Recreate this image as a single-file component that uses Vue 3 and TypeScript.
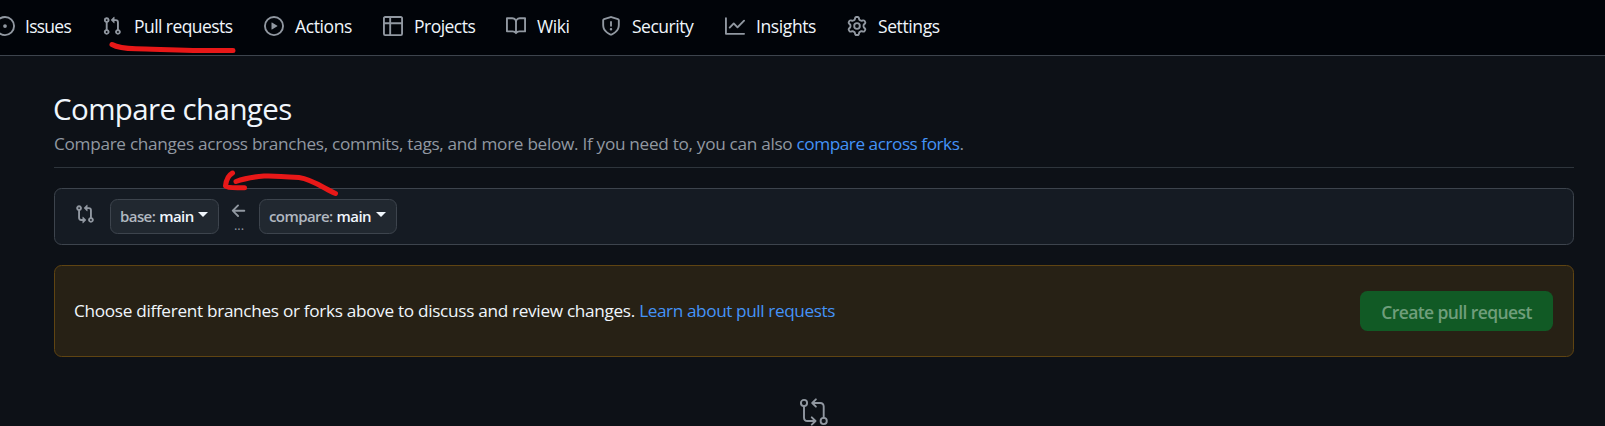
<script setup lang="ts">
interface NavItem {
  id: string
  label: string
  path: string
}

const ring = 'M8 0a8 8 0 1 1 0 16A8 8 0 0 1 8 0ZM1.5 8a6.5 6.5 0 1 0 13 0 6.5 6.5 0 0 0-13 0Z'

const comparePath =
  'M9.573.677A.25.25 0 0 1 10 .854V2.5h1A2.5 2.5 0 0 1 13.5 5v5.628a2.251 2.251 0 1 1-1.5 0V5a1 1 0 0 0-1-1h-1v1.646a.25.25 0 0 1-.427.177L7.177 3.427a.25.25 0 0 1 0-.354ZM6 12v-1.646a.25.25 0 0 1 .427-.177l2.396 2.396a.25.25 0 0 1 0 .354l-2.396 2.396A.25.25 0 0 1 6 15.146V13.5H5A2.5 2.5 0 0 1 2.5 11V5.372a2.25 2.25 0 1 1 1.5 0V11a1 1 0 0 0 1 1ZM4 3.25a.75.75 0 1 0-1.5 0 .75.75 0 0 0 1.5 0ZM12.75 12a.75.75 0 1 0 0 1.5.75.75 0 0 0 0-1.5Z'

const navItems: NavItem[] = [
  { id: 'issues', label: 'Issues', path: 'M8 9.5a1.5 1.5 0 1 0 0-3 1.5 1.5 0 0 0 0 3Z' + ring },
  {
    id: 'pulls',
    label: 'Pull requests',
    path: 'M1.5 3.25a2.25 2.25 0 1 1 3 2.122v5.256a2.251 2.251 0 1 1-1.5 0V5.372A2.25 2.25 0 0 1 1.5 3.25Zm5.677-.177L9.573.677A.25.25 0 0 1 10 .854V2.5h1A2.5 2.5 0 0 1 13.5 5v5.628a2.251 2.251 0 1 1-1.5 0V5a1 1 0 0 0-1-1h-1v1.646a.25.25 0 0 1-.427.177L7.177 3.427a.25.25 0 0 1 0-.354ZM3.75 2.5a.75.75 0 1 0 0 1.5.75.75 0 0 0 0-1.5Zm0 9.5a.75.75 0 1 0 0 1.5.75.75 0 0 0 0-1.5Zm8.25.75a.75.75 0 1 0 1.5 0 .75.75 0 0 0-1.5 0Z',
  },
  {
    id: 'actions',
    label: 'Actions',
    path: ring + 'm4.879-2.773 4.264 2.559a.25.25 0 0 1 0 .428l-4.264 2.559A.25.25 0 0 1 6 10.559V5.442a.25.25 0 0 1 .379-.215Z',
  },
  {
    id: 'projects',
    label: 'Projects',
    path: 'M0 1.75C0 .784.784 0 1.75 0h12.5C15.216 0 16 .784 16 1.75v12.5A1.75 1.75 0 0 1 14.25 16H1.75A1.75 1.75 0 0 1 0 14.25ZM6.5 6.5v8h7.75a.25.25 0 0 0 .25-.25V6.5Zm8-1.5V1.75a.25.25 0 0 0-.25-.25H6.5V5Zm-13 1.5v7.75c0 .138.112.25.25.25H5v-8ZM5 5V1.5H1.75a.25.25 0 0 0-.25.25V5Z',
  },
  {
    id: 'wiki',
    label: 'Wiki',
    path: 'M0 1.75A.75.75 0 0 1 .75 1h4.253c1.227 0 2.317.59 3 1.501A3.743 3.743 0 0 1 11.006 1h4.245a.75.75 0 0 1 .75.75v10.5a.75.75 0 0 1-.75.75h-4.507a2.25 2.25 0 0 0-1.591.659l-.622.621a.75.75 0 0 1-1.06 0l-.622-.621A2.25 2.25 0 0 0 5.258 13H.75a.75.75 0 0 1-.75-.75Zm7.251 10.324.004-5.073-.002-2.253A2.25 2.25 0 0 0 5.003 2.5H1.5v9h3.757a3.75 3.75 0 0 1 1.994.574ZM8.755 4.75l-.004 7.322a3.752 3.752 0 0 1 1.992-.572H14.5v-9h-3.495a2.25 2.25 0 0 0-2.25 2.25Z',
  },
  {
    id: 'security',
    label: 'Security',
    path: 'M7.467.133a1.748 1.748 0 0 1 1.066 0l5.25 1.68A1.75 1.75 0 0 1 15 3.48V7c0 1.566-.32 3.182-1.303 4.682-.983 1.498-2.585 2.813-5.032 3.855a1.697 1.697 0 0 1-1.33 0c-2.447-1.042-4.049-2.357-5.032-3.855C1.32 10.182 1 8.566 1 7V3.48a1.75 1.75 0 0 1 1.217-1.667Zm.61 1.429a.25.25 0 0 0-.153 0l-5.25 1.68a.25.25 0 0 0-.174.238V7c0 1.358.275 2.666 1.057 3.86.784 1.194 2.121 2.34 4.366 3.297a.196.196 0 0 0 .154 0c2.245-.956 3.582-2.104 4.366-3.298C13.225 9.666 13.5 8.36 13.5 7V3.48a.251.251 0 0 0-.174-.237l-5.25-1.68ZM8.75 4.75v3a.75.75 0 0 1-1.5 0v-3a.75.75 0 0 1 1.5 0ZM9 10.5a1 1 0 1 1-2 0 1 1 0 0 1 2 0Z',
  },
  {
    id: 'insights',
    label: 'Insights',
    path: 'M1.5 1.75V13.5h13.75a.75.75 0 0 1 0 1.5H.75a.75.75 0 0 1-.75-.75V1.75a.75.75 0 0 1 1.5 0Zm14.28 2.53-5.25 5.25a.75.75 0 0 1-1.06 0L7 7.06 4.28 9.78a.751.751 0 0 1-1.042-.018.751.751 0 0 1-.018-1.042l3.25-3.25a.75.75 0 0 1 1.06 0L10 7.94l4.72-4.72a.751.751 0 0 1 1.042.018.751.751 0 0 1 .018 1.042Z',
  },
  {
    id: 'settings',
    label: 'Settings',
    path: 'M8 0a8.2 8.2 0 0 1 .701.031C9.444.095 9.99.645 10.16 1.29l.288 1.107c.018.066.079.158.212.224.231.114.454.243.668.386.123.082.233.09.299.071l1.103-.303c.644-.176 1.392.021 1.82.63.27.385.506.792.704 1.218.315.675.111 1.422-.364 1.891l-.814.806c-.049.048-.098.147-.088.294.016.257.016.515 0 .772-.01.147.038.246.088.294l.814.806c.475.469.679 1.216.364 1.891a7.977 7.977 0 0 1-.704 1.217c-.428.61-1.176.807-1.82.63l-1.102-.302c-.067-.019-.177-.011-.3.071a5.909 5.909 0 0 1-.668.386c-.133.066-.194.158-.211.224l-.29 1.106c-.168.646-.715 1.196-1.458 1.26a8.006 8.006 0 0 1-1.402 0c-.743-.064-1.289-.614-1.458-1.26l-.289-1.106c-.018-.066-.079-.158-.212-.224a5.738 5.738 0 0 1-.668-.386c-.123-.082-.233-.09-.299-.071l-1.103.303c-.644.176-1.392-.021-1.82-.63a8.12 8.12 0 0 1-.704-1.218c-.315-.675-.111-1.422.363-1.891l.815-.806c.05-.048.098-.147.088-.294a6.214 6.214 0 0 1 0-.772c.01-.147-.038-.246-.088-.294l-.815-.806C.635 6.045.431 5.298.746 4.623a7.92 7.92 0 0 1 .704-1.217c.428-.61 1.176-.807 1.82-.63l1.102.302c.067.019.177.011.3-.071.214-.143.437-.272.668-.386.133-.066.194-.158.211-.224l.29-1.106C6.009.645 6.556.095 7.299.03 7.53.01 7.764 0 8 0Zm-.571 1.525c-.036.003-.108.036-.137.146l-.289 1.105c-.147.561-.549.967-.998 1.189-.173.086-.34.183-.5.29-.417.278-.97.423-1.529.27l-1.103-.303c-.109-.03-.175.016-.195.045-.22.312-.412.644-.573.99-.014.031-.021.11.059.19l.815.806c.411.406.562.957.53 1.456a4.709 4.709 0 0 0 0 .582c.032.499-.119 1.05-.53 1.456l-.815.806c-.081.08-.073.159-.059.19.162.346.353.677.573.989.02.03.085.076.195.046l1.102-.303c.56-.153 1.113-.008 1.53.27.161.107.328.204.501.29.447.222.85.629.997 1.189l.289 1.105c.029.109.101.143.137.146a6.6 6.6 0 0 0 1.142 0c.036-.003.108-.036.137-.146l.289-1.105c.147-.561.549-.967.998-1.189.173-.086.34-.183.5-.29.417-.278.97-.423 1.529-.27l1.103.303c.109.029.175-.016.195-.045.22-.313.411-.644.573-.99.014-.031.021-.11-.059-.19l-.815-.806c-.411-.406-.562-.957-.53-1.456a4.709 4.709 0 0 0 0-.582c-.032-.499.119-1.05.53-1.456l.815-.806c.081-.08.073-.159.059-.19a6.464 6.464 0 0 0-.573-.989c-.02-.03-.085-.076-.195-.046l-1.102.303c-.56.153-1.113.008-1.53-.27a4.44 4.44 0 0 0-.501-.29c-.447-.222-.85-.629-.997-1.189l-.289-1.105c-.029-.11-.101-.143-.137-.146a6.6 6.6 0 0 0-1.142 0ZM11 8a3 3 0 1 1-6 0 3 3 0 0 1 6 0ZM9.5 8a1.5 1.5 0 1 0-3.001.001A1.5 1.5 0 0 0 9.5 8Z',
  },
]
</script>

<template>
  <div class="page">
    <nav class="repo-nav">
      <a v-for="item in navItems" :key="item.id" class="nav-item" :class="item.id">
        <svg class="icon" viewBox="0 0 16 16"><path :d="item.path" /></svg>
        <span class="nav-label">{{ item.label }}</span>
      </a>
    </nav>

    <main class="content">
      <header class="heading">
        <h1 class="title">Compare changes</h1>
        <p class="subtitle">
          Compare changes across branches, commits, tags, and more below. If you need to, you can also
          <a class="link forks">compare across forks</a>.
        </p>
      </header>

      <section class="range">
        <svg class="icon range-icon" viewBox="0 0 16 16"><path :d="comparePath" /></svg>
        <button class="branch base">
          <span class="kind">base:</span><span class="name">main</span><i class="caret"></i>
        </button>
        <div class="direction">
          <svg class="arrow" viewBox="0 0 16 16">
            <path d="M7.78 12.53a.75.75 0 0 1-1.06 0L2.47 8.28a.75.75 0 0 1 0-1.06l4.25-4.25a.751.751 0 0 1 1.042.018.751.751 0 0 1 .018 1.042L4.81 7h7.44a.75.75 0 0 1 0 1.5H4.81l2.97 2.97a.75.75 0 0 1 0 1.06Z" />
          </svg>
          <span class="dots">...</span>
        </div>
        <button class="branch compare">
          <span class="kind">compare:</span><span class="name">main</span><i class="caret"></i>
        </button>
      </section>

      <section class="flash">
        <p class="flash-text">
          Choose different branches or forks above to discuss and review changes.
          <a class="link learn">Learn about pull requests</a>
        </p>
        <button class="create" disabled>Create pull request</button>
      </section>

      <svg class="blank-icon" viewBox="0 0 30 30">
        <circle cx="5" cy="6" r="3.1" />
        <circle cx="24.7" cy="24" r="3.1" />
        <path d="M5 9.2V20.5Q5 24 8.5 24H16.4M12.8 20.3L16.5 24L12.8 27.7" />
        <path d="M24.7 20.8V9.5Q24.7 6 21.2 6H13.3M16.9 2.3L13.2 6L16.9 9.7" />
      </svg>
    </main>

    <svg class="marks" viewBox="0 0 1605 426">
      <path d="M112 44.5C118 48 127 48.6 136 48.7C158 49 190 51 233 50.5" />
      <path d="M335.5 193.5C325 189 313 179.500 299 177.500C286 176.500 273 175.500 264 176C252 177 244 178.500 236 181.500" />
      <path d="M232.500 173C228 175.500 226 181 225.500 186C228 188.500 236 187.700 244.500 187.700" />
    </svg>
  </div>
</template>

<style>
body {
  margin: 0;
  background: #0d1117;
}
</style>

<style scoped>
.page {
  position: relative;
  height: 426px;
  overflow: hidden;
  background: #0d1117;
  color: #f0f6fc;
  font-family: "Open Sans", "Noto Sans", sans-serif;
  font-size: 17.5px;
}
.repo-nav {
  box-sizing: border-box;
  height: 56px;
  padding-bottom: 3px;
  background: #010409;
  border-bottom: 1px solid #3d444d;
  display: grid;
  grid-template-columns: 107px 162px 119px 123px 95px 124px 122px 120px;
  align-items: center;
  margin-left: -5px;
}
.nav-item {
  display: flex;
  align-items: center;
  gap: 11px;
  white-space: nowrap;
}
.nav-label {
  line-height: 26px;
  letter-spacing: -0.4px;
}
.issues {
  gap: 10px;
}
.issues .nav-label {
  letter-spacing: -0.75px;
}
.pulls {
  gap: 12px;
}
.pulls .nav-label {
  letter-spacing: -0.56px;
}
.projects .nav-label {
  letter-spacing: -0.52px;
}
.security .nav-label {
  letter-spacing: -0.48px;
}
.icon {
  width: 20px;
  height: 20px;
  flex: none;
  fill: #9198a1;
  fill-rule: evenodd;
}
.content {
  margin: 0 31px 0 54px;
  display: flex;
  flex-direction: column;
}
.heading {
  box-sizing: border-box;
  height: 112px;
  padding-top: 31px;
  border-bottom: 1px solid #3d444db3;
}
.title {
  margin: 0 0 0 -1px;
  font-size: 29.5px;
  line-height: 44px;
  font-weight: 400;
  letter-spacing: -0.6px;
}
.subtitle {
  margin: 0;
  font-size: 17.2px;
  line-height: 26px;
  color: #9198a1;
  letter-spacing: -0.3px;
  white-space: nowrap;
}
.link {
  color: #4493f8;
}
.forks {
  letter-spacing: -0.46px;
}
.learn {
  letter-spacing: -0.4px;
}
.range {
  box-sizing: border-box;
  height: 57px;
  margin-top: 20px;
  padding: 0 20px;
  display: flex;
  align-items: center;
  background: #151b23;
  border: 1px solid #3d444d;
  border-radius: 7.5px;
}
.range-icon {
  margin: 0 15px 5px 0;
}
.branch {
  box-sizing: border-box;
  height: 35px;
  padding: 0 0 2px 9px;
  display: flex;
  align-items: center;
  background: #212830;
  border: 1px solid #3d444d;
  border-radius: 7.5px;
  font-family: inherit;
  font-size: 15px;
  font-weight: 600;
  letter-spacing: -0.58px;
  color: #f0f6fc;
}
.base {
  width: 109px;
}
.compare {
  width: 138px;
}
.kind {
  margin-right: 4px;
  color: #b1b8c0;
}
.caret {
  margin: -2px 0 0 5px;
  border: 5px solid transparent;
  border-top-color: #f0f6fc;
  border-bottom: 0;
}
.base .caret {
  margin-left: 4px;
}
.direction {
  width: 40px;
  height: 35px;
  display: flex;
  flex-direction: column;
  align-items: center;
  color: #9198a1;
}
.arrow {
  width: 20px;
  height: 20px;
  margin-top: 2px;
  fill: #9198a1;
}
.dots {
  font-size: 13px;
  line-height: 13px;
  margin-top: -2px;
}
.flash {
  box-sizing: border-box;
  height: 92px;
  margin-top: 20px;
  padding: 0 20px 0 19px;
  display: flex;
  align-items: center;
  justify-content: space-between;
  background: #272115;
  border: 1px solid #5f4412;
  border-radius: 7.5px;
}
.flash-text {
  margin: 0;
  font-size: 17.2px;
  line-height: 26px;
  letter-spacing: -0.31px;
}
.create {
  width: 193px;
  height: 40px;
  padding: 1px 0 0;
  border: 0;
  border-radius: 7.5px;
  background: #115a25;
  color: #6f9e7b;
  font-family: inherit;
  font-size: 17.5px;
  font-weight: 600;
  letter-spacing: -0.6px;
}
.blank-icon {
  width: 30px;
  height: 30px;
  margin: 40px 0 0 745px;
  fill: none;
  stroke: #9198a1;
  stroke-width: 1.9;
  stroke-linecap: round;
  stroke-linejoin: round;
}
.marks {
  position: absolute;
  inset: 0;
  width: 1605px;
  height: 426px;
  fill: none;
  stroke: #e81818;
  stroke-width: 5;
  stroke-linecap: round;
  stroke-linejoin: round;
  pointer-events: none;
}
</style>
